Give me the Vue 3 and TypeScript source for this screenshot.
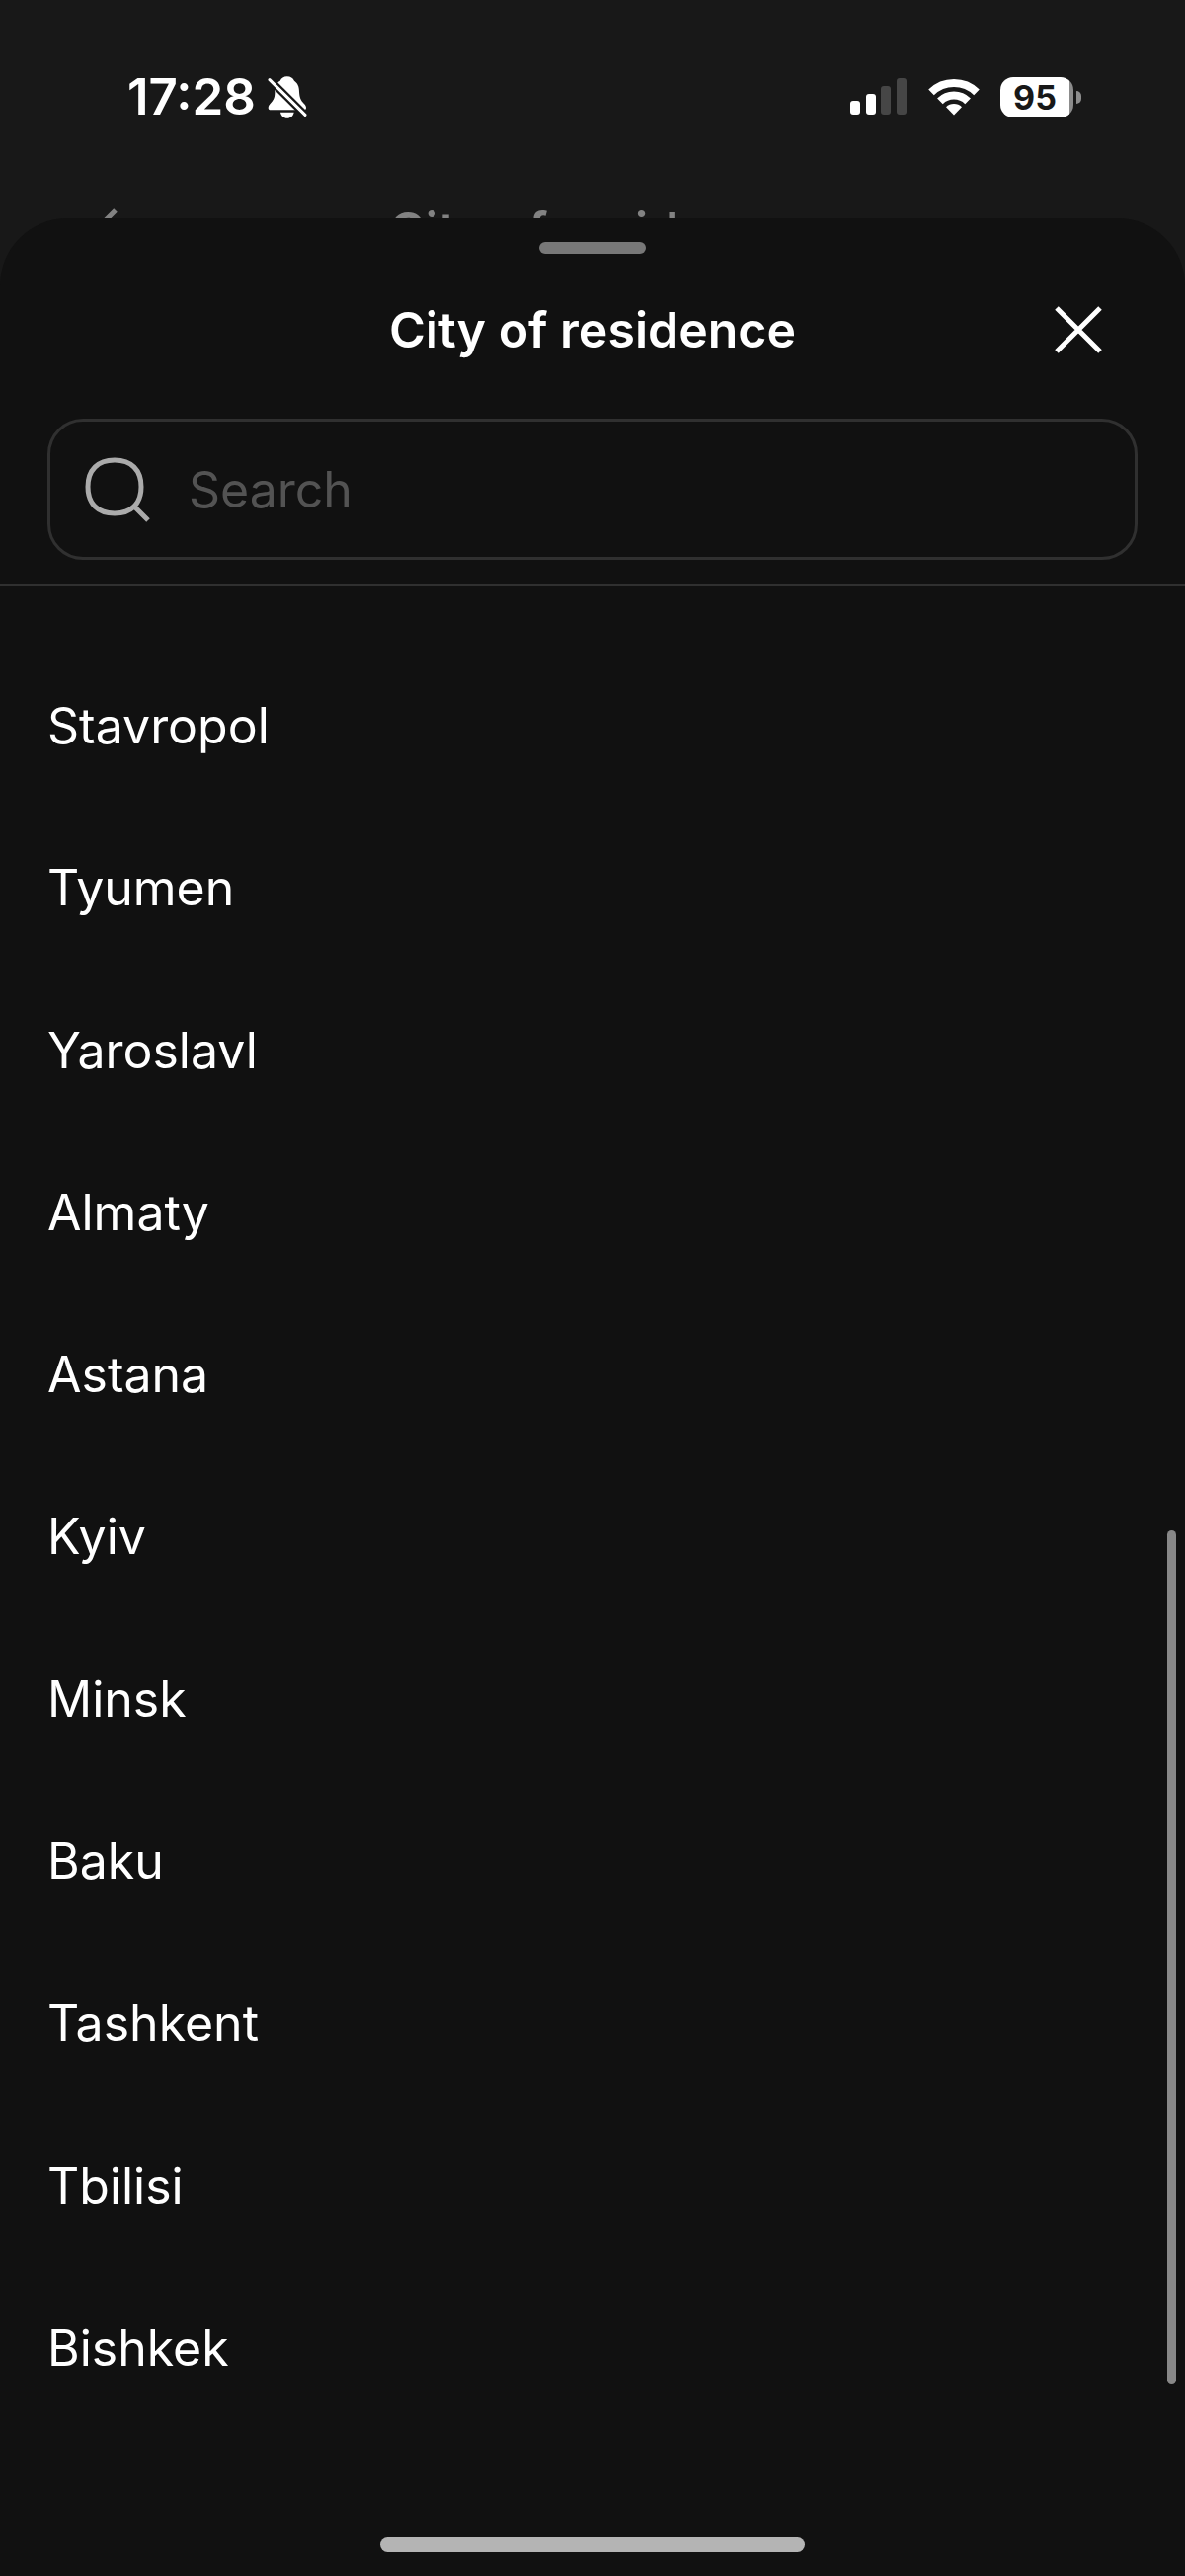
<script setup lang="ts">
import { computed, ref } from 'vue'

const cities: string[] = [
  'Stavropol',
  'Tyumen',
  'Yaroslavl',
  'Almaty',
  'Astana',
  'Kyiv',
  'Minsk',
  'Baku',
  'Tashkent',
  'Tbilisi',
  'Bishkek',
]

const query = ref('')
const visibleCities = computed(() =>
  cities.filter((city) => city.toLowerCase().includes(query.value.trim().toLowerCase())),
)
</script>

<template>
  <div class="screen">
    <div class="status">
      <div class="status-left">
        <span class="time">17:28</span>
        <svg class="bell" viewBox="0 0 120 129" aria-label="Silent mode">
          <path
            d="M59 1C70 1 77 6 81 14C91 21 96 31 96 48C97 66 101 74 110 83C116 89 117 92 117 97C117 101 114 103 110 103H10C4 103 2 100 2 96C2 90 5 86 11 80C19 72 22 64 22 48C22 31 27 20 38 14C42 6 49 1 59 1Z"
            fill="#fff"
          />
          <path d="M39 110H80C78 121 70 128 59 128C49 128 41 121 39 110Z" fill="#fff" />
          <path d="M-4 1L124 128" stroke="#181818" stroke-width="23" />
          <path d="M6 11L114 118" stroke="#fff" stroke-width="9" stroke-linecap="round" />
        </svg>
      </div>
      <div class="status-right">
        <svg class="signal" viewBox="0 0 58 38" aria-label="Signal">
          <rect x="0" y="23" width="10" height="14" rx="3" fill="#fff" />
          <rect x="16" y="16" width="10" height="21" rx="3" fill="#fff" />
          <rect x="31" y="8" width="10" height="29" rx="3" fill="#464646" />
          <rect x="47" y="0" width="10" height="37" rx="3" fill="#464646" />
        </svg>
        <svg class="wifi" viewBox="0 0 52 38" aria-label="Wi-Fi">
          <g fill="none" stroke="#fff" stroke-width="8">
            <path d="M3 14.3A33 33 0 0 1 49 14.3" />
            <path d="M11.9 23.3A20 20 0 0 1 40.1 23.3" />
          </g>
          <path d="M26 37.5L18 29.3A11.5 11.5 0 0 1 34 29.3Z" fill="#fff" />
        </svg>
        <div class="battery">
          <span class="battery-body">95</span>
          <span class="battery-tip"></span>
        </div>
      </div>
    </div>

    <div class="nav" aria-hidden="true">
      <svg class="chevron" viewBox="0 0 30 44">
        <path d="M25 2L5 22L25 42" fill="none" stroke="#828282" stroke-width="5" />
      </svg>
      <span class="title">City of residence</span>
    </div>

    <main class="sheet">
      <div class="grabber"></div>
      <header class="sheet-header">
        <h1 class="title">City of residence</h1>
        <button class="close" type="button" aria-label="Close">
          <svg viewBox="0 0 48 48">
            <path d="M2 2L46 46M46 2L2 46" stroke="#fff" stroke-width="5" />
          </svg>
        </button>
      </header>

      <label class="search">
        <svg viewBox="0 0 66 66" aria-hidden="true">
          <path
            d="M30 3C47 3 57 13 57 30C57 47 47 57 30 57C13 57 3 47 3 30C3 13 13 3 30 3ZM50 50L64 64"
            fill="none"
            stroke="#ababab"
            stroke-width="5"
          />
        </svg>
        <input v-model="query" type="text" placeholder="Search" aria-label="Search" />
      </label>

      <div class="results">
        <ul class="cities">
          <li v-for="city in visibleCities" :key="city">
            <button class="city" type="button">{{ city }}</button>
          </li>
        </ul>
        <div class="scrollbar"></div>
        <div class="home"></div>
      </div>
    </main>
  </div>
</template>

<style>
body {
  margin: 0;
  background: #111;
}
</style>

<style scoped>
.screen {
  display: flex;
  flex-direction: column;
  min-height: 100vh;
  background: #181818;
  color: #fff;
  font-family: Inter, 'Liberation Sans', sans-serif;
}

.screen *,
.screen {
  box-sizing: border-box;
}

svg {
  display: block;
  flex: none;
}

.status {
  display: flex;
  align-items: center;
  justify-content: space-between;
  height: 196px;
  padding: 0 105px 0 129px;
}

.status-left,
.status-right,
.battery {
  display: flex;
  align-items: center;
}

.status-left {
  gap: 12px;
}

.status-right {
  gap: 21px;
}

.time {
  font-size: 51px;
  font-weight: 600;
  line-height: 60px;
}

.bell {
  width: 40px;
  height: 43px;
}

.signal {
  width: 58px;
  height: 38px;
}

.wifi {
  width: 52px;
  height: 38px;
}

.battery {
  gap: 3px;
}

.battery-body {
  width: 74px;
  height: 41px;
  padding-right: 4px;
  border-radius: 13px;
  background: linear-gradient(to right, #fff 70px, #8c8c8c 70px);
  color: #181818;
  font-size: 34px;
  font-weight: 700;
  line-height: 41px;
  text-align: center;
}

.battery-tip {
  width: 5px;
  height: 13px;
  border-radius: 0 6px 6px 0;
  background: #8c8c8c;
}

.nav {
  display: grid;
  grid-template-columns: 1fr auto 1fr;
  align-items: center;
  height: 74px;
  padding: 0 92px;
  color: #828282;
}

.chevron {
  width: 30px;
  height: 44px;
}

.title {
  grid-column: 2;
  margin: 0;
  font-size: 50px;
  font-weight: 600;
  line-height: 60px;
}

.sheet {
  position: relative;
  display: flex;
  flex: 1;
  flex-direction: column;
  margin-top: -49px;
  padding-top: 24px;
  border-radius: 68px 68px 0 0;
  background: #111;
}

.grabber {
  align-self: center;
  width: 108px;
  height: 12px;
  border-radius: 6px;
  background: #787878;
}

.sheet-header {
  display: grid;
  grid-template-columns: 1fr auto 1fr;
  align-items: center;
  height: 154px;
  padding: 0 72px;
}

.close {
  justify-self: end;
  padding: 12px;
  border: 0;
  background: none;
  cursor: pointer;
}

.close svg {
  width: 48px;
  height: 48px;
}

.search {
  display: flex;
  align-items: center;
  gap: 39px;
  height: 143px;
  margin: 13px 48px 24px;
  padding: 0 35px;
  border: 3px solid #303030;
  border-radius: 36px;
}

.search svg {
  width: 66px;
  height: 66px;
}

.search input {
  flex: 1;
  min-width: 0;
  padding: 0;
  border: 0;
  outline: 0;
  background: none;
  color: #fff;
  font: inherit;
  font-size: 50px;
  line-height: 60px;
}

.search input::placeholder {
  color: #535353;
  opacity: 1;
}

.results {
  position: relative;
  display: flex;
  flex: 1;
  flex-direction: column;
  padding: 59px 0 24px;
  border-top: 3px solid #303030;
}

.cities {
  display: flex;
  flex: 1;
  flex-direction: column;
  margin: 0 0 110px;
  padding: 0;
  list-style: none;
}

.cities li {
  display: flex;
  flex: 1;
  min-height: 120px;
}

.city {
  flex: 1;
  padding: 0 48px;
  border: 0;
  background: none;
  color: inherit;
  font: inherit;
  font-size: 50px;
  line-height: 60px;
  text-align: left;
  cursor: pointer;
}

.scrollbar {
  position: absolute;
  top: 956px;
  right: 9px;
  bottom: 194px;
  width: 9px;
  border-radius: 5px;
  background: #888;
}

.home {
  align-self: center;
  width: 430px;
  max-width: 60%;
  height: 15px;
  border-radius: 8px;
  background: #b4b4b4;
}
</style>
